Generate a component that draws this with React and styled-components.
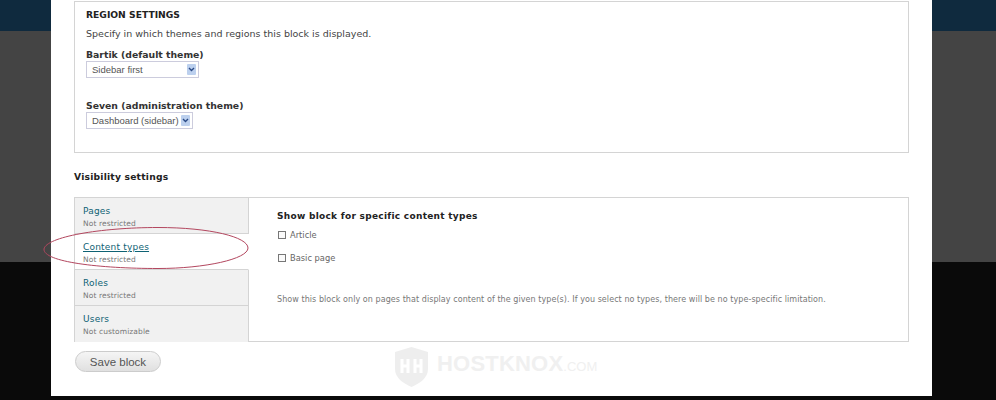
import React from 'react';
import styled, { createGlobalStyle } from 'styled-components';

const GlobalStyle = createGlobalStyle`
  html, body {
    margin: 0;
    padding: 0;
    background: #0a0a0a;
  }
  body {
    font-family: "DejaVu Sans", Verdana, sans-serif;
    color: #333;
    overflow: hidden;
  }
`;

const Page = styled.div`
  position: relative;
  width: 996px;
  height: 400px;
  overflow: hidden;
  background: linear-gradient(
    to bottom,
    #0f2a3e 0 31px,
    #444444 31px 262px,
    #0a0a0a 262px 400px
  );
`;

const Overlay = styled.div`
  box-sizing: border-box;
  width: 881px;
  height: 396px;
  margin-left: 51px;
  padding: 1px 23px 0;
  background: #fff;
`;

const Fieldset = styled.section`
  box-sizing: border-box;
  height: 152px;
  padding: 6px 11px 0;
  border: 1px solid #d4d4d4;
`;

const Legend = styled.h3`
  margin: 0;
  font-size: 9.2px;
  line-height: 13px;
  font-weight: 700;
  color: #222;
  text-transform: uppercase;
`;

const Hint = styled.p`
  margin: 6px 0 0;
  font-size: 9.5px;
  line-height: 13px;
  color: #444;
`;

const FieldLabel = styled.label`
  display: block;
  font-size: 9.3px;
  line-height: 13px;
  font-weight: 700;
  color: #333;
`;

const Field = styled.div`
  margin-top: ${(props) => props.$top}px;
`;

const FakeSelect = styled.div`
  box-sizing: border-box;
  display: flex;
  align-items: center;
  justify-content: space-between;
  width: ${(props) => props.$width}px;
  height: 17px;
  padding: 0 2px 0 5px;
  border: 1px solid #ccd;
  background: #fff;
  font-family: "Liberation Sans", Arial, sans-serif;
  font-size: 9.5px;
  color: #555;
  white-space: nowrap;
`;

const SelectArrow = styled.span`
  display: flex;
  align-items: center;
  justify-content: center;
  width: 9px;
  height: 11px;
  background: #bcd0ee;
  border-radius: 1px;
`;

const SectionTitle = styled.h2`
  margin: 17px 0 14px;
  font-size: 9.2px;
  line-height: 13px;
  font-weight: 700;
  letter-spacing: 0.2px;
  color: #222;
`;

const VerticalTabs = styled.div`
  box-sizing: border-box;
  display: flex;
  height: 145px;
  border: 1px solid #d4d4d4;
`;

const TabList = styled.ul`
  flex: 0 0 174px;
  margin: 0;
  padding: 0;
  list-style: none;
`;

const Tab = styled.li`
  box-sizing: border-box;
  height: 36px;
  padding: 7px 8px 0;
  background: ${(props) => (props.$active ? '#fff' : '#f1f1f1')};
  border-right: 1px solid ${(props) => (props.$active ? '#fff' : '#d4d4d4')};
  border-bottom: 1px solid #d4d4d4;

  &:last-child {
    border-bottom: 0;
  }
`;

const TabLink = styled.a`
  display: block;
  font-size: 9px;
  line-height: 12px;
  letter-spacing: 0.2px;
  color: #0f6274;
  text-decoration: ${(props) => (props.$active ? 'underline' : 'none')};
`;

const TabSummary = styled.div`
  margin-top: 1px;
  font-size: 7.5px;
  line-height: 11px;
  letter-spacing: 0.1px;
  color: #777;
`;

const TabPane = styled.div`
  flex: 1;
  padding: 12px 0 0 28px;
`;

const PaneTitle = styled.h4`
  margin: 0 0 6px;
  font-size: 9px;
  line-height: 13px;
  font-weight: 700;
  letter-spacing: 0.28px;
  color: #222;
`;

const CheckRow = styled.label`
  display: flex;
  align-items: center;
  gap: 4px;
  height: 12px;
  margin-bottom: 11px;
  padding-left: 1px;
  font-size: 8.3px;
  color: #666;
`;

const CheckBox = styled.span`
  box-sizing: border-box;
  width: 8px;
  height: 8px;
  border: 1px solid #777;
  background: #fafafa;
`;

const Description = styled.p`
  margin: 30px 0 0;
  font-size: 8px;
  line-height: 12px;
  letter-spacing: 0.065px;
  color: #777;
  white-space: nowrap;
`;

const SaveButton = styled.button`
  display: block;
  box-sizing: border-box;
  width: 86px;
  height: 21px;
  margin: 9px 0 0 1px;
  padding: 0;
  border: 1px solid #ccc;
  border-radius: 11px;
  background: linear-gradient(to bottom, #f5f5f5, #e0e0e0);
  font-family: "Liberation Sans", Arial, sans-serif;
  font-size: 11.5px;
  color: #555;
`;

const Annotation = styled.svg`
  position: absolute;
  left: 40px;
  top: 224px;
  width: 215px;
  height: 50px;
  pointer-events: none;
`;

const Watermark = styled.div`
  position: absolute;
  left: 395px;
  top: 347px;
  display: flex;
  align-items: center;
  gap: 9px;
  pointer-events: none;
`;

const WatermarkName = styled.span`
  padding-bottom: 6px;
  font-family: "Liberation Sans", Arial, sans-serif;
  font-size: 22px;
  font-weight: 700;
  letter-spacing: 0.2px;
  color: #f0f0f0;
`;

const WatermarkDomain = styled.span`
  font-size: 13px;
  font-weight: 400;
  letter-spacing: 0;
`;

const ArrowIcon = () => (
  <svg width="7" height="5" viewBox="0 0 7 5">
    <path d="M1 1l2.5 2.5L6 1" fill="none" stroke="#2a4a86" strokeWidth="1.4" />
  </svg>
);

const tabs = [
  { name: 'Pages', summary: 'Not restricted' },
  { name: 'Content types', summary: 'Not restricted', active: true },
  { name: 'Roles', summary: 'Not restricted' },
  { name: 'Users', summary: 'Not customizable' },
];

const App = () => (
  <Page>
    <GlobalStyle />
    <Overlay>
      <Fieldset>
        <Legend>Region settings</Legend>
        <Hint>Specify in which themes and regions this block is displayed.</Hint>
        <Field $top={8}>
          <FieldLabel>Bartik (default theme)</FieldLabel>
          <FakeSelect $width={113}>
            Sidebar first
            <SelectArrow><ArrowIcon /></SelectArrow>
          </FakeSelect>
        </Field>
        <Field $top={21}>
          <FieldLabel>Seven (administration theme)</FieldLabel>
          <FakeSelect $width={107}>
            Dashboard (sidebar)
            <SelectArrow><ArrowIcon /></SelectArrow>
          </FakeSelect>
        </Field>
      </Fieldset>
      <SectionTitle>Visibility settings</SectionTitle>
      <VerticalTabs>
        <TabList>
          {tabs.map((tab) => (
            <Tab key={tab.name} $active={tab.active}>
              <TabLink $active={tab.active}>{tab.name}</TabLink>
              <TabSummary>{tab.summary}</TabSummary>
            </Tab>
          ))}
        </TabList>
        <TabPane>
          <PaneTitle>Show block for specific content types</PaneTitle>
          <CheckRow><CheckBox />Article</CheckRow>
          <CheckRow><CheckBox />Basic page</CheckRow>
          <Description>
            Show this block only on pages that display content of the given type(s). If you select no types, there will be no type-specific limitation.
          </Description>
        </TabPane>
      </VerticalTabs>
      <SaveButton>Save block</SaveButton>
    </Overlay>
    <Annotation viewBox="0 0 215 50">
      <path
        d="M4 25C6 13 60 3.500 118 3.500C170 3.500 208 13 208 24C208 35 165 44.500 118 44.500C60 44.500 3 38 4 25Z"
        fill="none"
        stroke="#b3475f"
        strokeWidth="1"
      />
    </Annotation>
    <Watermark>
      <svg width="33" height="40" viewBox="0 0 33 40">
        <path d="M0 5L16.500 0L33 5V22C33 31 25 36 16.500 40C8 36 0 31 0 22Z" fill="#eeeeee" />
        <path d="M7 12v14M13 12v14M7 19h6M20 12v14M26 12v14M20 19h6" stroke="#fff" strokeWidth="3" fill="none" />
      </svg>
      <WatermarkName>HOSTKNOX<WatermarkDomain>.COM</WatermarkDomain></WatermarkName>
    </Watermark>
  </Page>
);

export default App;
